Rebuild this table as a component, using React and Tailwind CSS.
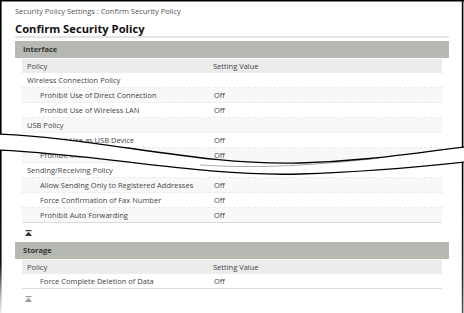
import React from 'react';

const font = { fontFamily: '"Open Sans", "Noto Sans", sans-serif' };

const interfaceRows = [
    { label: 'Wireless Connection Policy', group: true },
    { label: 'Prohibit Use of Direct Connection', value: 'Off' },
    { label: 'Prohibit Use of Wireless LAN', value: 'Off' },
    { label: 'USB Policy', group: true },
    { label: 'Prohibit Use as USB Device', value: 'Off' },
    { label: 'Prohibit Immediate Printing', value: 'Off' },
    { label: 'Sending/Receiving Policy', group: true },
    { label: 'Allow Sending Only to Registered Addresses', value: 'Off' },
    { label: 'Force Confirmation of Fax Number', value: 'Off' },
    { label: 'Prohibit Auto Forwarding', value: 'Off' },
];

const storageRows = [
    { label: 'Force Complete Deletion of Data', value: 'Off' },
];

function ToTop({ faded }) {
    return (
        <svg width="7" height="6" viewBox="0 0 7 6" className={faded ? 'text-[#9a9a9a]' : 'text-[#333]'}>
            <rect x="0.5" y="0" width="6" height="1.2" fill="currentColor" />
            <path d="M3.5 1.8 L6.5 5.2 L0.5 5.2 Z" fill="currentColor" />
            <rect x="0.5" y="5" width="6" height="1" fill="currentColor" />
        </svg>
    );
}

function Section({ title, rows, faded }) {
    return (
        <div>
            <div className="h-[17px] bg-[#b5b9b2] pl-[8px] pt-[1px] flex items-center text-[7.5px] font-bold text-[#333]">
                {title}
            </div>
            <div className="mx-[7px] mt-[1px]">
                <div className="h-[14px] bg-[#ececec] pt-[1px] flex items-center text-[7.5px] text-[#444]">
                    <div className="w-[191px] pl-[5px]">Policy</div>
                    <div>Setting Value</div>
                </div>
                {rows.map((row, i) => (
                    <div
                        key={row.label}
                        className={`h-[15px] pt-[2px] flex items-center text-[7.5px] text-[#444] ${
                            i % 2 === 1 ? 'bg-[#f8f8f8]' : 'bg-white'
                        } ${
                            i === rows.length - 1
                                ? 'border-b border-solid border-[#dcdcdc]'
                                : 'border-b border-dashed border-[#ececec]'
                        }`}
                    >
                        <div className={`w-[192px] ${row.group ? 'pl-[5px]' : 'pl-[18px]'}`}>{row.label}</div>
                        <div>{row.value}</div>
                    </div>
                ))}
            </div>
            <div className="h-[19px] pl-[10px] flex items-center">
                <ToTop faded={faded} />
            </div>
        </div>
    );
}

function Tear() {
    const line1 = 'M-2,134 C100,138 200,166 300,163 C370,161 420,152 466,147';
    const line2 = 'M-2,150 C100,154 200,177 300,174 C370,172 420,167 466,162';
    return (
        <svg className="absolute inset-0 pointer-events-none" width="464" height="313" viewBox="0 0 464 313">
            <defs>
                <linearGradient id="fadeLeft" x1="0" y1="150" x2="0" y2="313" gradientUnits="userSpaceOnUse">
                    <stop offset="0" stopColor="#000" />
                    <stop offset="0.7" stopColor="#111" />
                    <stop offset="0.9" stopColor="#bbb" />
                    <stop offset="1" stopColor="#eee" />
                </linearGradient>
                <linearGradient id="fadeRight" x1="0" y1="162" x2="0" y2="313" gradientUnits="userSpaceOnUse">
                    <stop offset="0" stopColor="#000" />
                    <stop offset="0.75" stopColor="#222" />
                    <stop offset="1" stopColor="#555" />
                </linearGradient>
            </defs>
            <path
                d={`${line1} L466,162 C420,167 370,172 300,174 C200,177 100,154 -2,150 Z`}
                fill="#fff"
            />
            <path d="M200,165 C250,168 300,167 380,158" fill="none" stroke="#aaa" strokeWidth="1" />
            <path d={line1} fill="none" stroke="#000" strokeWidth="1.3" />
            <path d={line2} fill="none" stroke="#000" strokeWidth="1.3" />
            <line x1="0" y1="0.7" x2="464" y2="0.7" stroke="#000" strokeWidth="1.4" />
            <line x1="0.8" y1="0" x2="0.8" y2="134" stroke="#000" strokeWidth="1.6" />
            <line x1="0.8" y1="150" x2="0.8" y2="313" stroke="url(#fadeLeft)" strokeWidth="1.6" />
            <line x1="462.6" y1="0" x2="462.6" y2="147" stroke="#000" strokeWidth="1.6" />
            <line x1="462.6" y1="162" x2="462.6" y2="313" stroke="url(#fadeRight)" strokeWidth="1.6" />
        </svg>
    );
}

export default function App() {
    return (
        <div className="relative w-[464px] h-[313px] overflow-hidden bg-white" style={font}>
            <div className="pl-[15px] pr-[15px] pt-[6px]">
                <div className="h-[12px] flex items-center text-[7.5px] text-[#555]">
                    Security Policy Settings : Confirm Security Policy
                </div>
                <div className="h-[15px] mt-[3px] pt-[1px] flex items-center text-[11.2px] font-bold text-[#111]">
                    Confirm Security Policy
                </div>
                <div className="h-[2px] bg-[#e4e4e4] mb-[3px]" />
                <Section title="Interface" rows={interfaceRows} />
                <Section title="Storage" rows={storageRows} faded />
            </div>
            <Tear />
        </div>
    );
}
